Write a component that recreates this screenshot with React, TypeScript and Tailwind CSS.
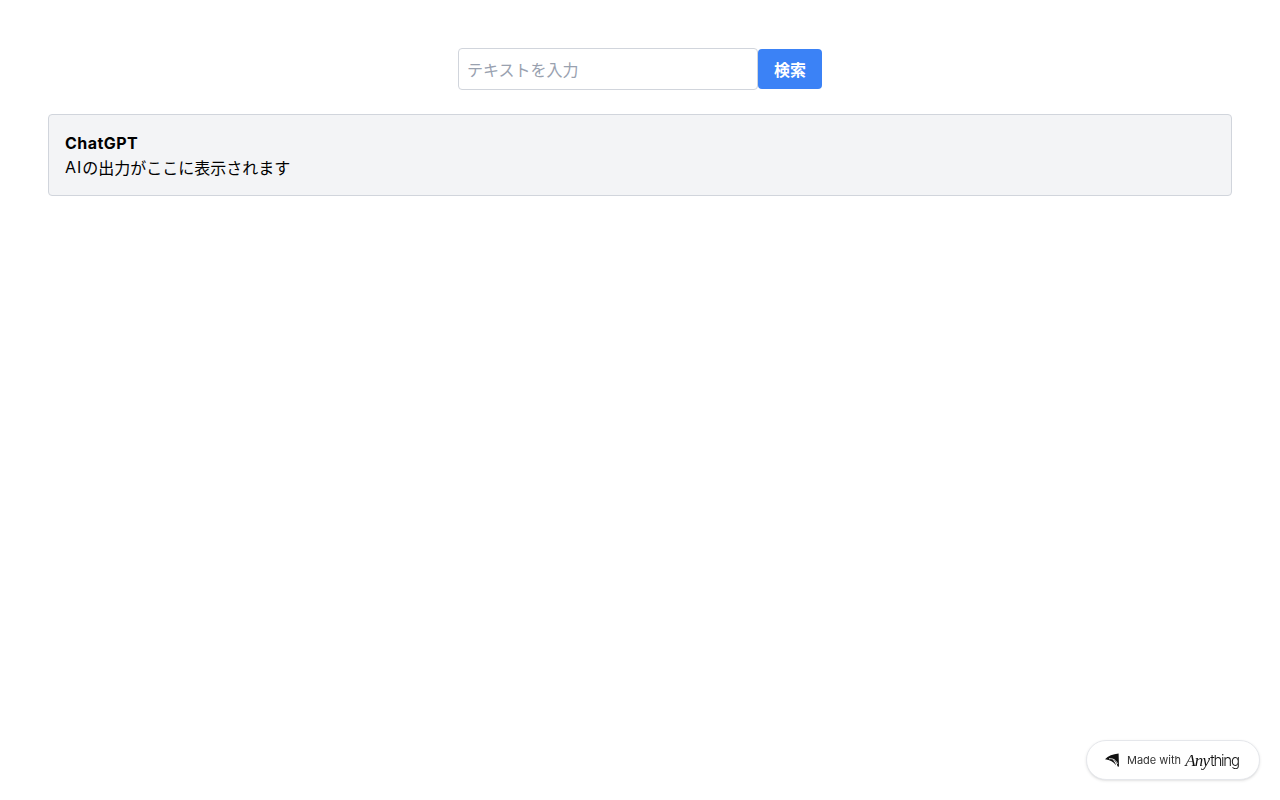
export default function App() {
  return (
    <div className="min-h-screen bg-white p-12 font-['Inter','Noto_Sans_CJK_JP',sans-serif] text-black">
      <div className="mb-6 flex items-center justify-center">
        <input
          type="text"
          placeholder="テキストを入力"
          className="w-[300px] rounded border border-gray-300 px-2 pt-[9px] pb-[7px] text-base leading-6 placeholder:text-gray-400"
        />
        <button className="rounded bg-[#3b82f6] px-4 pt-[9px] pb-[7px] text-base font-bold text-white">検索</button>
      </div>

      <div className="rounded border border-gray-300 bg-gray-100 p-4">
        <p className="font-bold tracking-[0.45px]">ChatGPT</p>
        <p>
          <span className="tracking-[1px]">AI</span>
          <span className="align-[-1px] leading-none">の出力がここに表示されます</span>
        </p>
      </div>

      <div className="fixed right-5 bottom-5 flex h-[40px] w-[174px] items-center rounded-full border border-gray-200 bg-white pl-[17px] shadow-sm">
        <svg width="16" height="16" viewBox="0 0 16 16" className="mr-[7px] text-[#111]">
          <path fill="currentColor" d="M1 7.2C4 4 9 2.2 14.6 1.6L15 14.8 13.4 14.2C13.2 11 11.4 8.8 8.6 8 10.6 9.6 11.6 11.2 11.9 13.2 9.8 10 6 7.6 1 7.2Z" />
          <path fill="none" stroke="white" strokeWidth="0.9" d="M5 6.8C8.6 6.2 12 8 13.5 11.8" />
        </svg>
        <span className="text-[11px] text-[#333]">Made with</span>
        <span className="ml-[4px] flex items-baseline text-[#111]">
          <span className="mr-[1px] font-['Liberation_Serif',serif] text-[17px] leading-none font-light tracking-[-0.8px] italic">Any</span>
          <span className="text-[15px] leading-none font-light tracking-[-1.2px]">thing</span>
        </span>
      </div>
    </div>
  );
}
